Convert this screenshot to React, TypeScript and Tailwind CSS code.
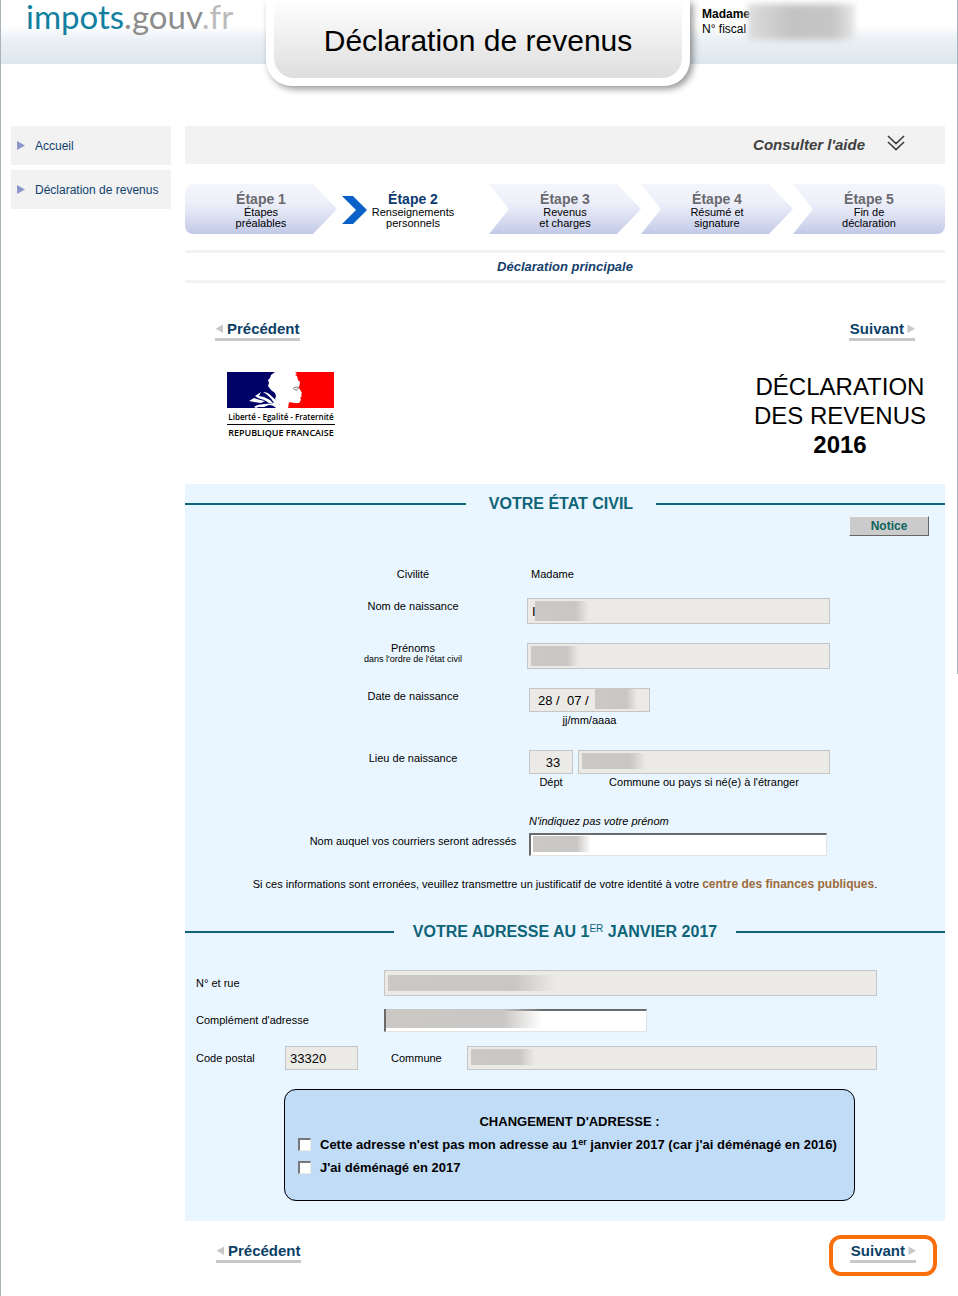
import { type ReactNode } from 'react';

const readonlyInput =
  'w-full border border-[#c6c6c6] bg-[#ebeae6] text-[13px] text-black outline-none';
const editableInput =
  'w-full border border-t-2 border-l-2 border-[#e3e3e3] border-t-[#6b6b6b] border-l-[#6b6b6b] bg-white px-1 text-[13px] text-black outline-none';

function Masked({ className, children }: { className: string; children: ReactNode }) {
  return (
    <div className="relative">
      {children}
      <span
        aria-hidden="true"
        className={'absolute bg-gradient-to-r from-[#cbc8c5] via-[#c9c7c5] via-75% to-transparent ' + className}
      />
    </div>
  );
}

function SectionTitle({ wide, children }: { wide?: boolean; children: ReactNode }) {
  return (
    <div className={'flex h-6 items-center ' + (wide ? 'gap-[23px]' : 'gap-[19px]')}>
      <span className={'h-0.5 bg-[#0e6478] ' + (wide ? 'flex-[35]' : 'flex-1')} />
      <h2 className="text-[16px] leading-6 font-bold text-[#0e6478]">{children}</h2>
      <span className={'h-0.5 bg-[#0e6478] ' + (wide ? 'flex-[36]' : 'flex-1')} />
    </div>
  );
}

function PrevLink() {
  return (
    <a href="#precedent" className="flex items-center border-b-3 border-[#c8c8c8] leading-[18px] text-[15px] font-bold text-[#0b3f66]">
      <svg width="12" height="10" viewBox="0 0 12 10" aria-hidden="true">
        <path d="M8 0.5V9L0.5 4.8Z" fill="#c8c8c8" />
      </svg>
      Précédent
    </a>
  );
}

function NextLink() {
  return (
    <a href="#suivant" className="flex items-center border-b-3 border-[#c8c8c8] pl-px leading-[18px] text-[15px] font-bold text-[#0b3f66]">
      Suivant
      <svg width="11" height="10" viewBox="0 0 11 10" aria-hidden="true">
        <path d="M3.500 0.500V9L11 4.800Z" fill="#c8c8c8" />
      </svg>
    </a>
  );
}

const stepFill = 'bg-[linear-gradient(#f5f6fc_0%,#eef0f9_35%,#dfe3f4_60%,#c2c9e7_100%)]';
const steps = [
  { title: 'Étape 1', lines: ['Étapes', 'préalables'], shape: stepFill + ' rounded-l-lg [clip-path:polygon(0_0,calc(100%_-_24px)_0,100%_50%,calc(100%_-_24px)_100%,0_100%)]' },
  { title: 'Étape 2', lines: ['Renseignements', 'personnels'], shape: '' },
  { title: 'Étape 3', lines: ['Revenus', 'et charges'], shape: stepFill + ' [clip-path:polygon(0_0,calc(100%_-_24px)_0,100%_50%,calc(100%_-_24px)_100%,0_100%,20px_50%)]' },
  { title: 'Étape 4', lines: ['Résumé et', 'signature'], shape: stepFill + ' [clip-path:polygon(0_0,calc(100%_-_24px)_0,100%_50%,calc(100%_-_24px)_100%,0_100%,20px_50%)]' },
  { title: 'Étape 5', lines: ['Fin de', 'déclaration'], shape: stepFill + ' rounded-r-lg [clip-path:polygon(0_0,100%_0,100%_100%,0_100%,20px_50%)]' },
];

function Steps() {
  return (
    <ol className="mt-5 grid grid-cols-5">
      {steps.map((s, i) => (
        <li key={s.title} className={'relative h-[50px] pt-[7px] text-center ' + s.shape}>
          {i === 1 && (
            <svg className="absolute top-3 left-[5px]" width="25" height="28" viewBox="0 0 25 28" aria-hidden="true">
              <path d="M0 0H11L25 14L11 28H0L14 14Z" fill="#0a62c9" />
            </svg>
          )}
          <div className={'text-[14px] leading-4 font-bold ' + (i === 1 ? 'text-[#0b3a70]' : 'text-[#6a6a6e]')}>{s.title}</div>
          <div className="text-[11px] leading-[11px] text-black">
            {s.lines[0]}
            <br />
            {s.lines[1]}
          </div>
        </li>
      ))}
    </ol>
  );
}

function RepublicLogo() {
  return (
    <div className="w-[108px]">
      <svg width="107" height="36" viewBox="0 0 107 36" role="img" aria-label="Marianne">
        <path d="M0 0H107V36H0Z" fill="#fff" />
        <path d="M0 0H48L44 3L43 6L41 8L42 11L41 14L44 18L48 21L49 24L48 27L50 30L53 33L50 36H0Z" fill="#000166" />
        <path d="M68 0H107V36H61C62 33 61 31 63 30C67 31 71 32 73 30L74 27L73 26L75 24L74 23L75 21L72 16L73 10L71 8L70 4L68 3L70 2Z" fill="#fe0000" />
        <path d="M22 29L27 26L33 28L38 29L34 31L27 30Z" fill="#fff" />
        <path d="M28 24L34 20L32 24L37 25L43 28L46 31L42 31L37 28L31 26Z" fill="#fff" />
        <path d="M36 20C42 20 45 25 50 29L55 36H49C47 34 45 33 42 33L37 35H31L38 32L47 31C44 26 41 23 36 20Z" fill="#fff" />
        <path d="M27 35C31 32 36 32 42 32L34 34L29 36Z" fill="#fff" />
        <path d="M66 16.500C68 14.500 70 15 72 15.500M67 17C69 19 71 18 71 16" fill="none" stroke="#6b6b6b" strokeWidth="1" />
      </svg>
      <div className="mt-1 border-b border-black pb-0.5 text-center font-['Open_Sans',sans-serif] text-[8px] leading-[10px] font-semibold whitespace-nowrap text-black">
        Liberté - Egalité - Fraternité
      </div>
      <div className="mt-0.5 text-center font-['Open_Sans',sans-serif] text-[9px] leading-[11px] font-semibold whitespace-nowrap text-black">
        REPUBLIQUE FRANCAISE
      </div>
    </div>
  );
}

const row = 'grid grid-cols-[228px_minmax(0,303px)] pl-[114px] leading-4';
const check =
  'size-[13px] shrink-0 appearance-none border border-t-2 border-l-2 border-[#ece9e4] border-t-[#777] border-l-[#777] bg-white checked:bg-[#0e6478]';

export default function App() {
  return (
    <div className="min-h-screen border-l border-[#a9b4b8] bg-white bg-[linear-gradient(#a3b4bc,#a3b4bc)] bg-[length:1px_674px] bg-right-top bg-no-repeat pr-px font-['Liberation_Sans',Arial,sans-serif] text-[11px] text-black">
      <header className="h-[126px]">
        <div className="grid h-16 grid-cols-[265px_424px_minmax(0,1fr)] bg-[linear-gradient(#fff_0%,#fff_40%,#eaf0f5_62%,#dee6ed_100%)]">
          <a href="#accueil" className="pl-[25px] font-['Lato',sans-serif] text-[33px] leading-8 text-[#12809f]">
            impots<span className="text-[#8d8d8d]">.gouv</span>
            <span className="text-[#bcbcbc]">.fr</span>
          </a>
          <div className="h-[86px] rounded-b-[26px] bg-white px-2 pb-2 shadow-[3px_3px_7px_rgba(0,0,0,0.42)]">
            <div className="h-full rounded-b-[20px] bg-[linear-gradient(#fff_0%,#f8f8f8_20%,#dedede_100%)] pt-[23px] text-center">
              <h1 className="text-[30px] leading-9">Déclaration de revenus</h1>
            </div>
          </div>
          <div className="relative pt-[7px] pl-3 text-[12px] leading-[15px]">
            <div className="font-bold">Madame</div>
            <div>N° fiscal</div>
            <span aria-hidden="true" className="absolute top-1 left-[58px] h-9 w-[107px] bg-[linear-gradient(90deg,#dcdcdc,#c3c3c3_40%,#c6c6c6_80%,#e8e8e8)] blur-[3px]" />
          </div>
        </div>
      </header>

      <div className="grid grid-cols-[160px_minmax(0,1fr)] gap-[14px] pr-3 pl-[10px]">
        <nav className="flex flex-col gap-[5px] text-[12px] text-[#0f3f6e]">
          {['Accueil', 'Déclaration de revenus'].map((t) => (
            <a key={t} href="#menu" className="flex h-[39px] items-center gap-[10px] bg-[#f2f2f2] pl-[6px]">
              <svg width="8" height="9" viewBox="0 0 8 9" aria-hidden="true">
                <path d="M0 0L8 4.500L0 9Z" fill="#8a97c8" />
              </svg>
              {t}
            </a>
          ))}
        </nav>

        <main>
          <button type="button" className="flex h-[38px] w-full items-center justify-end gap-[22px] bg-[#f2f2f2] pr-10 text-[15px] font-bold text-[#404040] italic">
            Consulter l'aide
            <svg width="18" height="20" viewBox="0 0 18 20" fill="none" stroke="#404040" strokeWidth="1.700" aria-hidden="true">
              <path d="M1 1L9 8.500L17 1M1 7L9 14.500L17 7" />
            </svg>
          </button>

          <Steps />

          <div className="mt-4 flex h-[33px] items-center justify-center border-y-3 border-[#f2f2f2] text-[13px] font-bold text-[#16406c] italic">
            Déclaration principale
          </div>

          <div className="mt-[37px] flex justify-between px-[30px]">
            <PrevLink />
            <NextLink />
          </div>

          <div className="mt-[31px] flex h-28 items-start justify-between pr-[19px] pl-[42px]">
            <RepublicLogo />
            <p className="text-center text-[24px] leading-[29px]">
              DÉCLARATION
              <br />
              DES REVENUS
              <br />
              <strong>2016</strong>
            </p>
          </div>

          <form className="bg-[#eaf6ff] pt-2 pb-5">
            <SectionTitle wide>VOTRE ÉTAT CIVIL</SectionTitle>
            <div className="flex justify-end pr-4">
              <button type="button" className="h-5 w-20 border border-[#f5f5f5] border-r-[#666] border-b-[#666] bg-[#cbcbcb] text-[12px] leading-4 font-bold text-[#0e665e]">
                Notice
              </button>
            </div>

            <div className={row + ' mt-[30px]'}>
              <div className="text-center">Civilité</div>
              <div className="pl-1">Madame</div>
            </div>

            <div className={row + ' mt-4'}>
              <label htmlFor="nom" className="text-center">Nom de naissance</label>
              <Masked className="top-[3px] left-2 h-5 w-[54px]">
                <input id="nom" readOnly value="I" className={readonlyInput + ' block h-[26px] px-1'} />
              </Masked>
            </div>

            <div className={row + ' mt-[19px]'}>
              <label htmlFor="prenoms" className="text-center leading-[11px]">
                Prénoms
                <br />
                <span className="block text-[9px]">dans l'ordre de l'état civil</span>
              </label>
              <Masked className="top-[3px] left-1 h-5 w-12">
                <input id="prenoms" readOnly className={readonlyInput + ' block h-[26px]'} />
              </Masked>
            </div>

            <div className={row + ' mt-[19px]'}>
              <label htmlFor="naissance" className="text-center">Date de naissance</label>
              <div className="ml-0.5 w-[121px] text-center">
                <Masked className="top-0 left-[66px] h-[21px] w-[42px]">
                  <input id="naissance" readOnly value="28 /  07 /" className={readonlyInput + ' block h-6 px-2'} />
                </Masked>
                jj/mm/aaaa
              </div>
            </div>

            <div className={row + ' mt-[22px]'}>
              <label htmlFor="dept" className="text-center">Lieu de naissance</label>
              <div className="ml-0.5 grid grid-cols-[44px_minmax(0,1fr)] gap-[5px] text-center">
                <div>
                  <input id="dept" readOnly value="33" className={readonlyInput + ' block h-6 pl-1 text-center'} />
                  Dépt
                </div>
                <div>
                  <Masked className="top-[3px] left-1 h-4 w-16">
                    <input id="commune-naissance" readOnly className={readonlyInput + ' block h-6'} />
                  </Masked>
                  <label htmlFor="commune-naissance">Commune ou pays si né(e) à l'étranger</label>
                </div>
              </div>
            </div>

            <div className={row + ' mt-[23px]'}>
              <label htmlFor="courrier" className="pt-5 text-center">Nom auquel vos courriers seront adressés</label>
              <div className="mr-[3px] ml-0.5">
                <em>N'indiquez pas votre prénom</em>
                <div className="mt-1">
                  <Masked className="top-[3px] left-1 h-4 w-[58px]">
                    <input id="courrier" className={editableInput + ' block h-[23px]'} />
                  </Masked>
                </div>
              </div>
            </div>

            <p className="mt-5 text-center leading-4">
              Si ces informations sont erronées, veuillez transmettre un justificatif de votre identité à votre{' '}
              <a href="#centre" className="text-[12px] font-bold text-[#9c6b3c]">centre des finances publiques</a>.
            </p>

            <div className="mt-7">
              <SectionTitle>
                VOTRE ADRESSE AU 1<sup className="text-[10px] font-normal">ER</sup> JANVIER 2017
              </SectionTitle>
            </div>

            <div className="mt-[26px] pr-[68px] pl-[11px]">
              <div className="grid grid-cols-[188px_minmax(0,1fr)] items-center">
                <label htmlFor="rue">N° et rue</label>
                <Masked className="top-[5px] left-1 h-4 w-[168px]">
                  <input id="rue" readOnly className={readonlyInput + ' block h-[26px]'} />
                </Masked>
              </div>
              <div className="mt-[13px] grid grid-cols-[188px_263px] items-center">
                <label htmlFor="complement">Complément d'adresse</label>
                <Masked className="top-0 left-0.5 h-[19px] w-[156px]">
                  <input id="complement" className={editableInput + ' block h-[23px]'} />
                </Masked>
              </div>
              <div className="mt-[14px] grid grid-cols-[89px_73px_109px_minmax(0,1fr)] items-center">
                <label htmlFor="cp">Code postal</label>
                <input id="cp" readOnly value="33320" className={readonlyInput + ' block h-6 px-1'} />
                <label htmlFor="commune" className="pl-[33px]">Commune</label>
                <Masked className="top-[3px] left-1 h-4 w-16">
                  <input id="commune" readOnly className={readonlyInput + ' block h-6'} />
                </Masked>
              </div>
            </div>

            <fieldset className="mt-[19px] mr-[90px] ml-[99px] h-28 rounded-xl border border-black bg-[#c1dcf7] pt-5 pl-[13px] text-[13px] leading-[23px] font-bold">
              <div className="pr-[13px] text-center">CHANGEMENT D'ADRESSE :</div>
              <label className="flex items-center gap-[9px] whitespace-nowrap">
                <input type="checkbox" className={check} />
                <span>
                  Cette adresse n'est pas mon adresse au 1<sup className="text-[9px]">er</sup> janvier 2017 (car j'ai déménagé en 2016)
                </span>
              </label>
              <label className="flex items-center gap-[9px]">
                <input type="checkbox" className={check} />
                J'ai déménagé en 2017
              </label>
            </fieldset>
          </form>

          <div className="mt-[14px] mb-5 flex items-start justify-between pr-2 pl-[31px]">
            <div className="pt-[7px]">
              <PrevLink />
            </div>
            <div className="rounded-xl border-4 border-[#f86f0b] px-[17px] pt-[3px] pb-[9px]">
              <NextLink />
            </div>
          </div>
        </main>
      </div>
    </div>
  );
}
